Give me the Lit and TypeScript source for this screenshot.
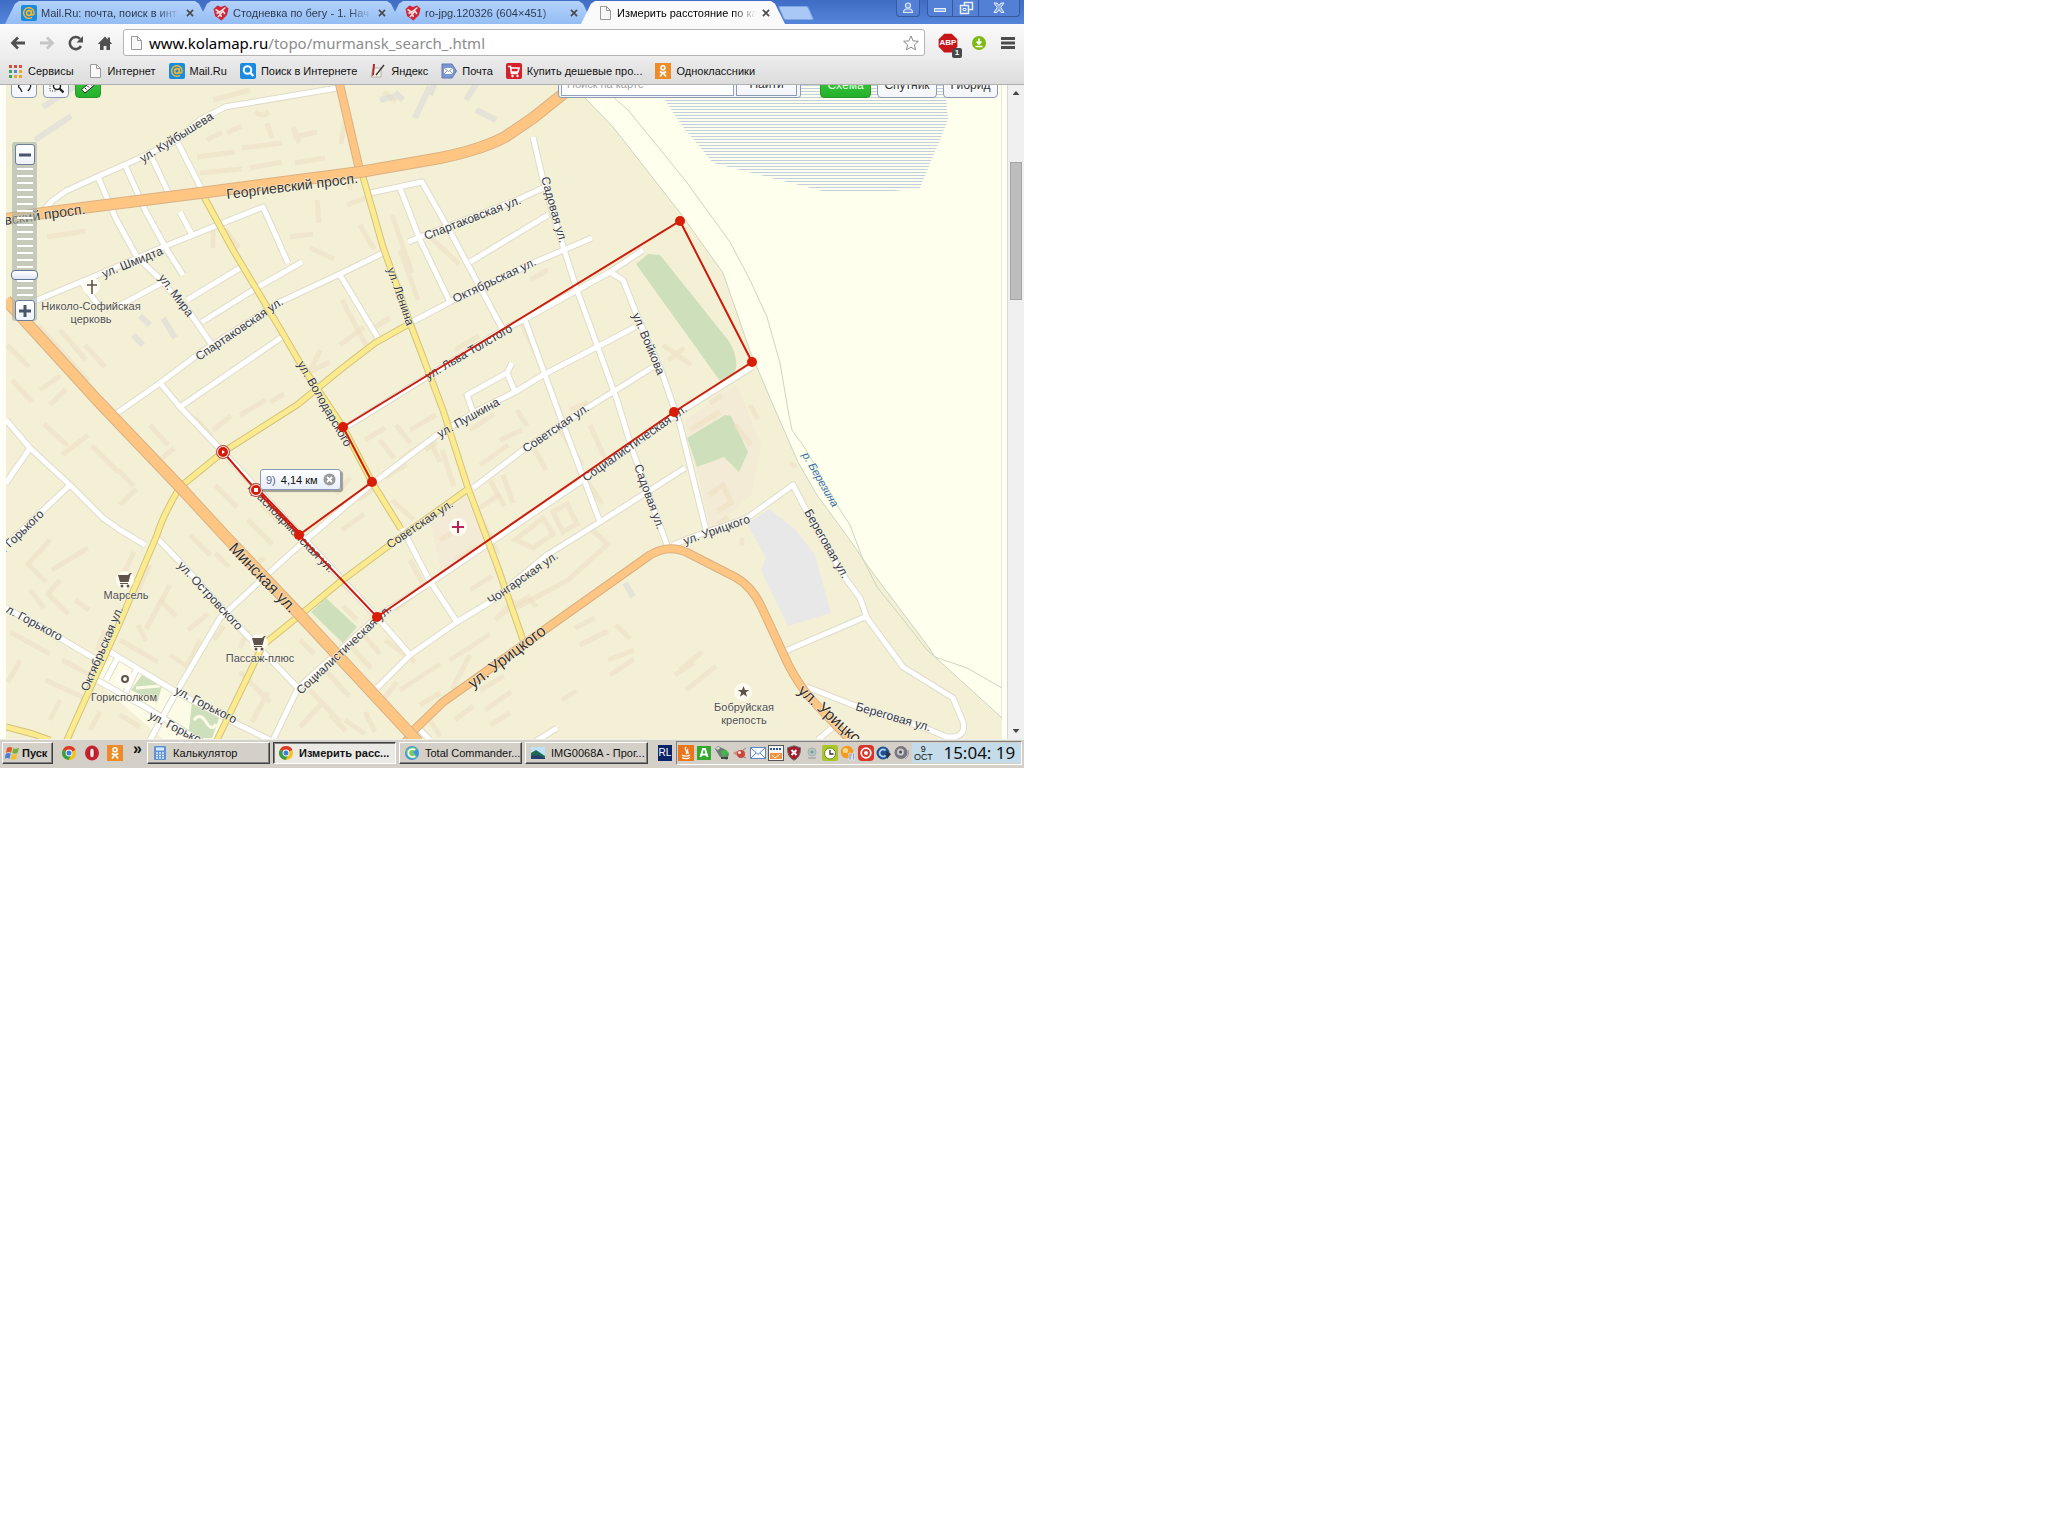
import { LitElement, html, svg, css, TemplateResult, SVGTemplateResult } from "lit";
import { customElement } from "lit/decorators.js";
import { classMap } from "lit/directives/class-map.js";

type Art = SVGTemplateResult;

const pageIcon: Art = svg`<path d="M3.500 1.500h6l4 4v9h-10z" fill="#f8f8f8" stroke="#9a9a9a"/><path d="M9.500 1.500v4h4" fill="none" stroke="#9a9a9a"/>`;
const mailRu: Art = svg`<rect width="16" height="16" rx="2" fill="#168de2"/><circle cx="8" cy="8" r="2.400" fill="none" stroke="#f5b52c" stroke-width="1.600"/><path d="M10.400 5.500v3.300c0 2 2.800 1.600 2.800-1A5.300 5.300 0 1 0 11 12.300" fill="none" stroke="#f5b52c" stroke-width="1.500"/>`;
const runner: Art = svg`<path d="M.5 4l4-3.500 3.500 1.500 4-1.500 3.500 3L14 10l-5.500 5.500L2 11z" fill="#cf2638"/><path d="M2.500 4.500l4 2.500 6-4.500M3.500 8.500l3-1.500 2 5M5 12l5-6 2 3" stroke="#f4dfe0" stroke-width="1.500" fill="none"/>`;
const okIcon: Art = svg`<rect width="16" height="16" fill="#ee8b27"/><circle cx="8" cy="4.800" r="2" fill="none" stroke="#fff" stroke-width="1.600"/><path d="M4.800 8.500c2 1.500 4.400 1.500 6.400 0M8 9.500l-3 4M8 9.500l3 4" stroke="#fff" stroke-width="1.700" fill="none"/>`;
const chromeIcon: Art = svg`<circle cx="8" cy="8" r="7" fill="#f2c318"/><path d="M8 8L2 4.400A7 7 0 0 1 14.400 5z" fill="#dd3a2c"/><path d="M8 8L2 4.400A7 7 0 0 0 7.500 15l3-5.500z" fill="#3b9c47"/><circle cx="8" cy="8" r="3.400" fill="#fff"/><circle cx="8" cy="8" r="2.500" fill="#3d7fd9"/>`;

const icons: Record<string, Art> = {
  page: pageIcon,
  mailru: mailRu,
  runner,
  ok: okIcon,
  chrome: chromeIcon,
  back: svg`<path d="M15 8H3M8 2.500L2.500 8 8 13.500" fill="none" stroke="#505050" stroke-width="2.800"/>`,
  forward: svg`<path d="M1 8h12M8 2.500L13.500 8 8 13.500" fill="none" stroke="#c6c6c6" stroke-width="2.800"/>`,
  reload: svg`<path d="M13 11A6 6 0 1 1 12 3.800" fill="none" stroke="#505050" stroke-width="2.600"/><path d="M15 1v6.500H8.500z" fill="#505050"/>`,
  home: svg`<path d="M8 1.500L.8 9h2.200v6h3.600v-4h2.800v4H13V9h2.200L13 6.600V2.500h-2.200v2z" fill="#505050"/>`,
  star: svg`<path d="M8 1l2.100 4.900 5.300.4-4 3.500 1.200 5.100L8 12.200l-4.600 2.700 1.200-5.100-4-3.500 5.300-.4z" fill="#fff" stroke="#8a8a8a"/>`,
  menu: svg`<path d="M1 3.500h14M1 8h14M1 12.500h14" stroke="#4c4c4c" stroke-width="2.800"/>`,
  download: svg`<circle cx="8" cy="8" r="7" fill="#7fb913"/><path d="M8 3.500v5M5.500 6.500L8 9l2.500-2.500M4.500 11.500h7" stroke="#fff" stroke-width="1.700" fill="none"/>`,
  apps: svg`${[2, 7, 12].map((y, r) => [2, 7, 12].map((x, c) => svg`<rect x=${x} y=${y} width="3" height="3" fill=${["#d94a3c", "#d94a3c", "#d9503c", "#43a05a", "#4d84dd", "#e7a928", "#43a05a", "#e7a928", "#e7a928"][r * 3 + c]} />`))}`,
  search: svg`<rect width="16" height="16" rx="2" fill="#1a8be0"/><circle cx="7.500" cy="7" r="3.800" fill="none" stroke="#fff" stroke-width="2"/><path d="M10.300 9.800l3 3.200" stroke="#fff" stroke-width="2.400"/>`,
  yandex: svg`<path d="M3 5h8v9H1z" fill="#f5f3ea" stroke="#a8a492" stroke-width=".8"/><path d="M3 1h2l-1 11-2 1z" fill="#b3262b"/><path d="M14 2L6 12" stroke="#333" stroke-width="1.300"/>`,
  post: svg`<path d="M1 1h10l4.500 7-4.500 7H1z" fill="#7d97d2" stroke="#6078b4"/><path d="M3 5h9v6H3z" fill="#fff"/><path d="M3 5l4.500 3.500L12 5M3 11l3-3M12 11L9 8" fill="none" stroke="#8c9bc4"/>`,
  cart: svg`<rect width="16" height="16" rx="2" fill="#d5202c"/><path d="M2 3.500h2.500l1 7H12M5 5h8l-1 4H6" fill="none" stroke="#fff" stroke-width="1.600"/><circle cx="6.500" cy="13" r="1.200" fill="#fff"/><circle cx="11.500" cy="13" r="1.200" fill="#fff"/>`,
  calc: svg`<rect x="2" y="1" width="12" height="14" rx="1" fill="#5e92d6"/><rect x="4" y="2.500" width="8" height="3" fill="#d9ecff"/><path d="M4 8h8M4 10.500h8M4 13h8" stroke="#e6f0fb" stroke-width="1.500" stroke-dasharray="2 1"/>`,
  totalcmd: svg`<circle cx="8" cy="8" r="7" fill="#3997dd"/><path d="M2 6c2-4 8-5 11-2L9 7l4 5c-4 3-9 1-10-2z" fill="#7cc66e"/><path d="M11 5a4 4 0 1 0 0 6" stroke="#fff" stroke-width="1.700" fill="none"/>`,
  image: svg`<rect x="1" y="2" width="14" height="12" fill="#bfe2fa"/><path d="M1 8l5-3 9 6v3H1z" fill="#1e6b54"/><path d="M1 11l7-1 7 3v1H1z" fill="#22406f"/>`,
  opera: svg`<ellipse cx="8" cy="8" rx="7" ry="7.500" fill="#c8202c"/><ellipse cx="8" cy="8" rx="2.400" ry="5" fill="#f4dedd" stroke="#8c1018"/>`,
  windows: svg`<path d="M2 3c2-1.500 3.600-1.300 5.300-.2L6 7.800C4.300 6.800 2.700 6.800 1 8z" fill="#e2562c"/><path d="M8.300 3.300c2 1 3.600.8 5.700-.5l-1.300 5c-2 1.300-3.700 1.300-5.500.3z" fill="#70b13b"/><path d="M.8 9c1.800-1.300 3.400-1.200 5-.2l-1.300 5c-1.600-1-3.200-1-4.900.2z" fill="#4a7fd8"/><path d="M7 9.200c2 1 3.600.8 5.500-.4l-1.400 5c-2 1.200-3.600 1.200-5.400.2z" fill="#f3bf2d"/>`,
  user: svg`<circle cx="8" cy="5.500" r="2.500" fill="#6f93dc" stroke="#dde8fb" stroke-width="1.200"/><path d="M3.500 12.500c0-5 9-5 9 0z" fill="#6f93dc" stroke="#dde8fb" stroke-width="1.200"/>`,
  minimize: svg`<rect x="2.500" y="8.500" width="11" height="3" fill="#8fb0ea" stroke="#e6eefb"/>`,
  restore: svg`<path d="M6.500 2.500h8v7h-8z" fill="none" stroke="#e6eefb" stroke-width="1.500"/><path d="M2.500 5.500h8v8h-8z" fill="#5b86d6" stroke="#e6eefb" stroke-width="1.500"/><path d="M5 8.500h3v2H5z" fill="none" stroke="#e6eefb"/>`,
  close: svg`<path d="M3 3h3l2 2.500L10 3h3L9.800 7.500 13 12.500h-3L8 9.600l-2 2.900H3l3.200-5z" fill="#86a9e6" stroke="#e6eefb"/>`,
  cross: svg`<path d="M4.500 4.500l7 7M11.500 4.500l-7 7" stroke="#4a4a4a" stroke-width="1.900"/>`,
  octagon: svg`<path d="M5 .5h6L15.500 5v6L11 15.500H5L.5 11V5z" fill="#c71518"/>`,
  java: svg`<rect width="16" height="16" fill="#e9761c"/><path d="M8 2c-3 3 3 4 0 7M10 4c-2 2 1 2 0 5M4 10c2 1.500 6 1.500 8 0M4 12.500c2 1.500 6 1.500 8 0" stroke="#fff" stroke-width="1.200" fill="none"/>`,
  agent: svg`<rect x="1" y="1" width="14" height="14" fill="#34a82d"/><path d="M4.500 12L7 4h2l2.500 8M5.500 9.500h5" stroke="#fff" stroke-width="1.900" fill="none"/>`,
  usb: svg`<path d="M1 4l3-3 8 4 3 4-2 6-7-3z" fill="#6b7f70"/><path d="M7 6l5-1 3 3-6 4z" fill="#44b849"/><path d="M7 13h7" stroke="#3f4a42" stroke-width="2"/><path d="M2.500 4l3-1.500" stroke="#dcdcdc" stroke-width="2"/>`,
  plug: svg`<path d="M1 8l4-2 2-1 3 3-1 4-5-2z" fill="#d08a84"/><circle cx="9" cy="9" r="4" fill="#c8463c"/><circle cx="7.500" cy="7.500" r="1.500" fill="#f6e8e4"/><path d="M11 5l3-2M12 12l2 1" stroke="#888"/>`,
  envelope: svg`<path d="M.5 2.500h15v11H.5z" fill="#f8fbff" stroke="#5b86c6"/><path d="M.5 2.500L8 9.500l7.500-7M.5 13.500L6 8M15.500 13.500L10 8" fill="none" stroke="#5b86c6"/>`,
  note: svg`<rect x=".5" y=".5" width="15" height="15" fill="#f6f6f6" stroke="#555"/><path d="M2 4h12" stroke="#2a55a5" stroke-width="2" stroke-dasharray="2 1"/><path d="M2 8h12v6H2z" fill="#f5903d"/><path d="M4 10l3 3 5-4" stroke="#fff" fill="none"/>`,
  shield: svg`<path d="M8 .8l6.500 2c0 6-1.500 10-6.500 12.400C3 12.800 1.500 8.800 1.500 2.800z" fill="#a31d2c" stroke="#64707a"/><path d="M5.500 5l5 5M10.500 5l-5 5" stroke="#fff" stroke-width="1.900"/>`,
  webcam: svg`<circle cx="8" cy="7" r="4" fill="#b9c8c6" stroke="#a1adab"/><circle cx="8" cy="7" r="1.600" fill="#6f9a9c"/><path d="M4 13h8" stroke="#b0b4b0" stroke-width="2"/>`,
  alarm: svg`<rect width="16" height="16" rx="2" fill="#a9c62a"/><circle cx="8" cy="8.500" r="5.500" fill="#fff" stroke="#6d8a16"/><path d="M8 5v4h3.500" stroke="#303030" stroke-width="1.300" fill="none"/>`,
  pause: svg`<circle cx="7" cy="7" r="6.300" fill="#f59b1e"/><circle cx="5.500" cy="5.500" r="2.600" fill="#fcd98a"/><path d="M9 8h2v7H9zM12.500 8h2v7h-2z" fill="#7d9bd8" stroke="#fff" stroke-width=".6"/>`,
  record: svg`<rect width="16" height="16" rx="4" fill="#d9352a"/><circle cx="8" cy="8" r="4.800" fill="none" stroke="#fff" stroke-width="1.700"/><circle cx="8" cy="8" r="2" fill="#fff"/>`,
  globe: svg`<circle cx="7" cy="8" r="6.500" fill="#1f4f8e"/><path d="M9.500 5.500a3.500 3.500 0 1 0 0 5" stroke="#a9d2f2" stroke-width="1.800" fill="none"/><path d="M10 6l5 3-4 5z" fill="#2c3440"/>`,
  speaker: svg`<circle cx="7" cy="7.500" r="6.500" fill="#76767c"/><circle cx="6.500" cy="7" r="3.500" fill="#c9c9ce"/><circle cx="6.500" cy="7" r="1.500" fill="#4c4c52"/><path d="M11 14c3-2 4-5 3-9" stroke="#9a8fc0" fill="none"/>`,
  lasso: svg`<path d="M4 8c-2 0-2-4 1-5M12 3c4 1 3 5 0 8M4 8l2 4" fill="none" stroke="#222" stroke-width="1.300"/>`,
  zoomArea: svg`<path d="M2 3v8h7" fill="none" stroke="#222" stroke-dasharray="1 1.500"/><circle cx="9" cy="6" r="3.500" fill="#fff" stroke="#222" stroke-width="1.500"/><path d="M11.500 8.500l4 4" stroke="#222" stroke-width="2.300"/>`,
  ruler: svg`<path d="M1.500 9.500l9-7.500 3.500 3.500-9 7.500z" fill="#fff" stroke="#222"/><path d="M5 8l1.500 1.500M7.500 6L9 7.500M10 4l1.500 1.500" stroke="#222"/>`,
};

const icon = (name: string, cls = "ic") =>
  html`<svg class=${cls} viewBox="0 0 16 16" aria-hidden="true">${icons[name]}</svg>`;

const whiteRoads = [
  "M43 211L52 201 66 191 97 177 140 158 177 140 200 120 225 107 337 88",
  "M98 177L116 219 137 257 158 277 190 313 212 345",
  "M125 165L146 212 167 250 183 275",
  "M152 158L168 192",
  "M180 212L192 235",
  "M178 143L202 190",
  "M30 303L93 277 163 247 263 207 288 263",
  "M80 280L98 305",
  "M117 307L167 280",
  "M187 300L240 268",
  "M202 322L258 287 302 262",
  "M117 413L160 383 200 353 280 302 340 274 383 253",
  "M340 275L378 338",
  "M160 383L180 407 282 337",
  "M178 405L223 452 377 617 410 655",
  "M6 420L30 448 70 485 103 518 120 530 145 545",
  "M30 448L6 483",
  "M70 485L6 545",
  "M157 538L180 562 240 628 298 688 273 740",
  "M150 740L173 698 220 618 270 572 300 545 368 487 437 435 477 411 515 392 543 375 597 347 635 327",
  "M515 392L507 373 512 363M507 373L467 395 473 412",
  "M6 608L60 638 97 660",
  "M110 652L173 690 233 722 270 740",
  "M93 678L147 708 198 740",
  "M118 657L106 680M137 668L126 692",
  "M298 688L377 617 430 583 580 482 680 412 752 367",
  "M343 429L430 375 503 330 527 318 610 272 643 250",
  "M610 272L623 280 640 323 662 373 680 425 707 534",
  "M377 688L410 655 457 622 490 602 547 555 600 522 685 468",
  "M402 528L428 578 457 622",
  "M533 137L543 180 562 243 577 290 617 400 633 452 667 545",
  "M400 188L420 240 450 302",
  "M370 193L422 182 453 237 503 330",
  "M408 242L420 237 517 200 543 188",
  "M470 262L548 215",
  "M412 322L450 302 533 263 592 238",
  "M525 320L557 408 600 522",
  "M473 488L523 450 587 408 653 367",
  "M673 545L690 538 747 518 793 485 807 512 843 575 860 598 867 618 903 667 953 698 963 722Q967 738 947 737L925 728 853 705 807 687",
  "M783 652L865 617",
  "M420 730L430 740M530 745L557 728M818 740L832 728",
];

const yellowRoads = [
  "M203 195L233 250 282 332 300 363 343 427 372 482 401 529",
  "M363 177L383 247 410 323 443 410 468 488 498 568 523 640",
  "M409 324L375 343 340 370 297 405 223 452 180 487Q163 515 157 535L120 622 66 742",
  "M217 740L263 645 300 615 340 582 387 547 468 489",
  "M6 727L33 734 50 740",
];

const wideRoads = [
  "M6 219L43 213 200 193 360 172 440 158Q480 150 505 137L533 118 578 82",
  "M6 300L97 400 180 487 227 538 300 615 418 742",
];

const orangeRoads = [
  "M339 82L360 172",
  "M406 742L412 732 443 702 467 685 547 628 650 555Q670 543 690 554L735 577Q752 586 762 608L788 664Q798 684 812 700L850 740",
];

const hulls = [
  "M197 157l38-5M242 148l40-5M293 137l24-5M200 173l42-4M250 168l32-6M295 163l30-5M207 140l15-8M227 133l15-7M267 123l5 15M293 127l6 16",
  "M213 100l37-10M47 237l38-6M213 230v18M317 200l2 23M290 237l23-3M310 248l24 11M225 230l14 18M255 112q8 6 14 0",
  "M384 92l12 10M345 120l-4 24M347 205l20-8M350 170v20M392 215l20 58M425 232l34 32M400 250l18 50M360 225l14 24M342 300l24 45M370 330l20-12",
  "M340 345l24-18M350 360l20-14M320 350l-14 30M310 372l20-10M7 345l22 22M38 325l50 56M12 380l20 22M40 390l20-14M50 405l16-16M85 345l20 22M60 330l26 30",
  "M44 424l24 22M92 446l26 26M118 470l16 16M62 455l26-20M130 430l10 10M150 425l18 20M160 460l14-12M195 418l16 18M213 430l18-14M240 415l26-15M270 402l14-8",
  "M50 540l-22 24 18 18M52 570l36-22M60 580l-12 14 20 20M75 600l14 10M30 590l14 18M120 505l16-16M134 552l-12 26M150 565l-16 34M170 585l-24 44",
  "M190 480l16-12M205 520l16 16M215 485l22 22M196 500l20 22M248 520l24 24M262 505l18 18M215 553l14 14M190 535l20 20M250 570l14-12M276 590l22 22",
  "M188 630l20-16M200 640l-12 24M138 625l8 16M120 640l38 22M170 655l18 12M105 630l-8 20M160 600l16 16M214 640l10-14M240 648l8-18",
  "M10 632l40 22M62 660l34 18M20 660l-12 22M45 680l40 18M60 700l-10 20M90 730l10-18M120 715l20 12",
  "M240 672l30 30M252 722l16-30M285 715l12-22M300 727l24-26M310 690l30 32M325 670l24 26M345 640l26 28M357 620l-14-14M362 600l-22-18M330 715l16 16M300 640l14 14",
  "M342 530l22-16M358 500l20-14M385 478l22-14M350 478l-14 16M392 500l22 20M400 460l22-16M430 440l10 22M410 430l26-15M365 440l20-12M380 440l14 18M396 425l14 18",
  "M442 450l12 36M470 430l24-16M480 465l28-20M490 480l14 26M503 475l10 28M517 410l10 16M532 445l14 25M545 435l20-14M500 440l22-10M560 430l22 34M590 425l18 40M570 410l18-8",
  "M515 540l28-22 10 16-20 14zM553 512l14-8 10 20-14 8zM480 508l20-14M482 520l16 34M456 560l22-14M470 590l22-14M410 560l14 26M440 540l16-10M580 470l22 34M592 530l16 14-40 36-52 28",
  "M470 655l-18 34M450 660l40-26M400 690l40-26M500 615l28-18 8 10M515 600l-20 20M420 705l20-12M430 720l10 16M480 690l24-14M485 710l26-18M455 720l18-14M490 725l20-12",
  "M575 628l20-10M580 645l28-14M562 700l14-9M608 660l26-10M610 675l24-16M616 625l14 14M675 675l18-12M680 670l22-18M686 690l30-24",
  "M690 430l30-18M735 425l16 20M709 495l14-10 8 18-14 8M718 525l10-8M790 463l6 4M742 538v8M663 345l28 20M668 360l16-12M710 403l12-8M750 405l8 14",
  "M345 720l20 14M365 712l10 20M383 700l14-18M530 280l18-10M425 450l12-8M360 630l20 24M385 640l30 22M395 610l22-18M520 320l16 34M455 350l24-14",
];

const greyHulls = "M35 140l36-24M43 107l34-22M163 318l12 20M133 335l10 10M140 316l10 9M395 92l8 8M415 118l15-32M430 95l6-16M466 100l14-22M476 110l20 10M625 583l8 14M380 100l16-4";

interface Label { t: string; x: number; y: number; a: number; s?: string }

const labels: Label[] = [
  { t: "ул. Куйбышева", x: 143, y: 163, a: -32 },
  { t: "Георгиевский просп.", x: 227, y: 199, a: -7, s: "mid" },
  { t: "вский просп.", x: 5, y: 225, a: -8, s: "mid" },
  { t: "ул. Шмидта", x: 104, y: 278, a: -22 },
  { t: "ул. Мира", x: 158, y: 278, a: 53 },
  { t: "Спартаковская ул.", x: 199, y: 361, a: -34 },
  { t: "ул. Володарского", x: 297, y: 364, a: 60 },
  { t: "ул. Ленина", x: 387, y: 269, a: 71 },
  { t: "Спартаковская ул.", x: 426, y: 240, a: -21 },
  { t: "Октябрьская ул.", x: 455, y: 303, a: -25 },
  { t: "Садовая ул.", x: 541, y: 178, a: 74 },
  { t: "ул. Льва Толстого", x: 428, y: 380, a: -30 },
  { t: "ул. Войкова", x: 632, y: 315, a: 67 },
  { t: "ул. Пушкина", x: 440, y: 438, a: -29 },
  { t: "Советская ул.", x: 526, y: 453, a: -34 },
  { t: "Советская ул.", x: 390, y: 549, a: -34 },
  { t: "Чонгарская ул.", x: 491, y: 605, a: -35 },
  { t: "Социалистическая ул.", x: 586, y: 482, a: -35 },
  { t: "Садовая ул.", x: 634, y: 466, a: 70 },
  { t: "ул. Урицкого", x: 473, y: 689, a: -37, s: "big" },
  { t: "Социалистическая ул.", x: 301, y: 695, a: -43 },
  { t: "Минская ул.", x: 228, y: 549, a: 46, s: "big" },
  { t: "Красноармейская ул.", x: 247, y: 488, a: 46 },
  { t: "ул. Островского", x: 177, y: 566, a: 47 },
  { t: ". Горького", x: 5, y: 553, a: -44 },
  { t: "л. Горького", x: 5, y: 612, a: 28 },
  { t: "Октябрьская ул.", x: 88, y: 692, a: -67 },
  { t: "ул. Горького", x: 174, y: 693, a: 27 },
  { t: "ул. Горького", x: 148, y: 718, a: 27 },
  { t: "ул. Урицкого", x: 685, y: 545, a: -19 },
  { t: "Береговая ул.", x: 804, y: 512, a: 60 },
  { t: "Береговая ул.", x: 855, y: 710, a: 16 },
  { t: "ул. Урицкого", x: 797, y: 692, a: 42, s: "big" },
  { t: "р. Березина", x: 802, y: 455, a: 60, s: "river" },
];

const places: [string, number, number][] = [
  ["Николо-Софийская", 91, 310],
  ["церковь", 91, 323],
  ["Марсель", 126, 599],
  ["Пассаж-плюс", 260, 662],
  ["Горисполком", 124, 701],
  ["Бобруйская", 744, 711],
  ["крепость", 744, 724],
];

const route = "M223 452L256 490 299 535 372 482 343 427 680 221 752 362 674 412 377 617 299 535";
const stops: [number, number][] = [[299, 535], [372, 482], [343, 427], [680, 221], [752, 362], [674, 412], [377, 617]];

const trolley = (x: number, y: number) => svg`
  <circle class="halo" cx=${x} cy=${y} r="9"/>
  <path transform="translate(${x - 7} ${y - 7})" d="M0 2h10l2-2h2l-1.500 1.500L10.500 9H2zM2 10h8v1H2z" fill="#5f534c"/>
  <circle cx=${x - 3} cy=${y + 6} r="1.500" fill="#5f534c"/><circle cx=${x + 3} cy=${y + 6} r="1.500" fill="#5f534c"/>`;

const terminal = (x: number, y: number, glyph: string) => svg`
  <g transform="translate(${x} ${y})">
    <circle r="7" fill="#b2483c"/><circle r="6" fill="#fbe9e2"/><circle r="5" fill="#d41c0c"/>
    <path d=${glyph} fill="#fff"/>
  </g>`;

@customElement("town-map")
class TownMap extends LitElement {
  static styles = css`
    :host { display: block; overflow: hidden; background: #f4f0d6; }
    svg { display: block; width: 100%; height: 100%; }
    .line { fill: none; stroke-linejoin: round; }
    .hull { fill: none; stroke: #ecdfc3; stroke-width: 5; opacity: 0.55; }
    .grey { stroke: #d8d8d8; stroke-width: 6; }
    .white-edge { stroke: #dfdccb; stroke-width: 7; }
    .white { stroke: #ffffff; stroke-width: 5; }
    .yellow-edge { stroke: #d3c27c; stroke-width: 7; }
    .yellow { stroke: #fbea8e; stroke-width: 5; }
    .orange-edge { stroke: #dab184; stroke-width: 9; }
    .orange { stroke: #fec583; stroke-width: 7; }
    .wide-edge { stroke: #dab184; stroke-width: 12; }
    .wide { stroke: #fec583; stroke-width: 10; }
    .green { fill: #cde0bb; }
    .bank { fill: none; stroke: #cdd5c3; }
    .halo { fill: #fffdf4; opacity: 0.9; }
    text { font: 12px "Liberation Sans", Arial, sans-serif; fill: #353a4a; }
    .name { paint-order: stroke; stroke: #fbf8e8; stroke-width: 1px; }
    .mid { font-size: 14px; fill: #33302c; }
    .big { font-size: 16px; fill: #33302c; }
    .river { font-size: 11px; font-style: italic; fill: #3470a8; }
    .place { font-size: 11px; text-anchor: middle; fill: #4e4e4e; }
    .route { fill: none; stroke: #cb1c0c; stroke-width: 2; }
    .stop { fill: #d81e06; }
  `;

  private roads(list: string[], kind: string) {
    return svg`${list.map((d) => svg`<path class="line ${kind}-edge" d=${d}/>`)}${list.map((d) => svg`<path class="line ${kind}" d=${d}/>`)}`;
  }

  render() {
    return html`<svg viewBox="0 85 1007 654" preserveAspectRatio="xMinYMin slice" role="img" aria-label="Карта">
      <defs>
        <pattern id="marsh" width="6" height="3" patternUnits="userSpaceOnUse"><rect y="1" width="6" height="1" fill="#c2cfdf"/></pattern>
        <clipPath id="sheet"><rect x="6" y="80" width="996" height="662"/></clipPath>
      </defs>
      <rect y="80" width="1007" height="662" fill="#fffff8"/>
      <g clip-path="url(#sheet)">
        <rect x="6" y="80" width="996" height="662" fill="#f4f0d5"/>
        <path d="M570 82L584 97 613 127 681 214 723 273 750 351 773 405 798 462 817 495 850 540 867 565 927 645 935 657 1002 718V80z" fill="#feffec" stroke="#cdd5c3"/>
        <path class="bank" d="M600 85L613 97 628 110 685 180 730 242 750 280 767 317 780 363 788 410 792 430 805 448 837 505 850 525 862 557 877 587 902 618 927 650 935 657 967 668 1002 688"/>
        <path d="M652 82L663 97 680 123 713 163 830 193 877 193 920 188 948 120 945 82z" fill="url(#marsh)"/>
        <path d="M430 520l36-24 20 50-44 30zM685 420l52-35 24 60-10 50-40 35z" fill="#f2e8d4" opacity=".7"/>
        <path class="green" d="M636 264l12-10 12 1 64 80q14 16 12 34l-10 18-6-6z"/>
        <path class="green" d="M687 438l38-23 6 1 17 36-9 20-15-15-27 10z"/>
        <path class="green" d="M311 612l15-14 31 29-14 16z"/>
        <path d="M112 655l64 34 50 24-12 27h-50l-70-60z" fill="#fcfbe6"/>
        <path class="green" d="M142 675l20 11-5 17-26-13zM192 702l28 14-8 22h-24z"/>
        <path d="M136 688l24-2M194 720q6-8 12 2t10 2" stroke="#fcfbe6" stroke-width="3" fill="none"/>
        <path d="M747 524l22-15 26 20 20 26 16 58-43 13-27-56 5-12z" fill="#e8e8e8"/>
        ${hulls.map((d) => svg`<path class="hull" d=${d}/>`)}
        <path class="hull grey" d=${greyHulls}/>
        ${this.roads(whiteRoads, "white")}
        ${this.roads(yellowRoads, "yellow")}
        ${this.roads(orangeRoads, "orange")}
        ${this.roads(wideRoads, "wide")}
        ${labels.map((l) => svg`<text class="name ${l.s ?? ""}" transform="translate(${l.x} ${l.y}) rotate(${l.a})">${l.t}</text>`)}
        <circle class="halo" cx="91" cy="286" r="9"/>
        <path d="M92 280v14M87 285h10" stroke="#5f534c" stroke-width="1.600"/>
        ${trolley(125, 580)}${trolley(259, 643)}
        <circle class="halo" cx="125" cy="679" r="9"/>
        <circle cx="125" cy="679" r="3" fill="none" stroke="#5f534c" stroke-width="2"/>
        <circle class="halo" cx="743" cy="692" r="9"/>
        <path d="M743.500 686l1.500 4h4.200l-3.400 2.600 1.300 4.200-3.600-2.600-3.600 2.600 1.300-4.200-3.400-2.600h4.200z" fill="#5f534c"/>
        <circle class="halo" cx="458" cy="527" r="9"/>
        <path d="M458 521v12M452 527h12" stroke="#b4235a" stroke-width="2"/>
        ${places.map(([t, x, y]) => svg`<text class="name place" x=${x} y=${y}>${t}</text>`)}
        <path class="route" d=${route}/>
        <path class="route" d="M257 488L300 533"/>
        ${stops.map(([x, y]) => svg`<circle class="stop" cx=${x} cy=${y} r="5"/>`)}
        ${terminal(223, 452, "M-1-2l3 2-3 2z")}
        ${terminal(256, 490, "M-2-2h4v4h-4z")}
      </g>
    </svg>`;
  }
}

const tabs = [
  { title: "Mail.Ru: почта, поиск в инт", icon: "mailru", active: false },
  { title: "Стодневка по бегу - 1. Нач", icon: "runner", active: false },
  { title: "ro-jpg.120326 (604×451)", icon: "runner", active: false },
  { title: "Измерить расстояние по ка", icon: "page", active: true },
];

const bookmarks: [string, string][] = [
  ["apps", "Сервисы"],
  ["page", "Интернет"],
  ["mailru", "Mail.Ru"],
  ["search", "Поиск в Интернете"],
  ["yandex", "Яндекс"],
  ["post", "Почта"],
  ["cart", "Купить дешевые про..."],
  ["ok", "Одноклассники"],
];

const tasks: [string, string, boolean][] = [
  ["calc", "Калькулятор", false],
  ["chrome", "Измерить расс...", true],
  ["totalcmd", "Total Commander...", false],
  ["image", "IMG0068A - Прог...", false],
];

const tray = ["java", "agent", "usb", "plug", "envelope", "note", "shield", "webcam", "alarm", "pause", "record", "globe", "speaker"];

@customElement("app-root")
class AppRoot extends LitElement {
  static styles = css`
    :host { display: block; min-height: 100vh; background: #fff; font: 11px "Liberation Sans", Tahoma, sans-serif; color: #111; }
    * { box-sizing: border-box; }
    button, input { font: inherit; color: inherit; margin: 0; }
    button { padding: 0; border: 0; background: none; }
    a { color: inherit; text-decoration: none; }
    .desktop { width: 50vw; height: 50vh; display: flex; flex-direction: column; overflow: hidden; background: #e4e4e4; }
    .ic { width: 16px; height: 16px; flex: none; display: block; }

    .strip { display: flex; height: 24px; padding-left: 5px; background: linear-gradient(#3f6cc4, #5585da); flex: none; }
    .tab { flex: 0 1 204px; min-width: 0; display: flex; align-items: center; gap: 3px; height: 23px; margin: 1px -12px 0 0; padding: 0 12px 0 16px;
      clip-path: polygon(0 100%, 10px 12%, 14px 0, calc(100% - 14px) 0, calc(100% - 10px) 12%, 100% 100%); background: linear-gradient(#b3d2fb, #94bdf4); color: #2d3b52; }
    .tab.active { background: #fafafa; color: #000; z-index: 1; }
    .tab a { flex: 1; min-width: 0; overflow: hidden; white-space: nowrap; display: flex; align-items: center; gap: 4px; line-height: 20px; -webkit-mask-image: linear-gradient(to right, #000 85%, transparent); mask-image: linear-gradient(to right, #000 85%, transparent); }
    .tab button .ic { width: 14px; height: 14px; }
    .new { width: 30px; height: 14px; margin: 6px 0 0 8px; transform: skewX(24deg); background: #a9c8f5; border: 1px solid #7fa5e2; border-radius: 2px; }
    .caption { display: flex; margin: 0 4px 0 auto; height: 17px; }
    .caption button { display: grid; place-items: center; width: 26px; border: 1px solid #36599f; border-top: 0; background: #5380d4; }
    .caption button + button { border-left: 0; }
    .caption .person { margin-right: 7px; border-radius: 0 0 4px 4px; width: 24px; }
    .caption .min { border-left: 1px solid #36599f; border-radius: 0 0 0 4px; }
    .caption .shut { width: 41px; border-radius: 0 0 4px 0; }

    .nav { display: flex; align-items: center; height: 35px; padding: 2px 8px 0 10px; gap: 13px; background: linear-gradient(#fafafa, #ececec); flex: none; }
    .address { flex: 1; display: flex; align-items: center; height: 27px; margin-left: -3px; padding: 0 5px 0 4px; gap: 5px; background: #fff; border: 1px solid #b4b4b4; border-radius: 3px; }
    .url { flex: 1; position: relative; font: 15px/24px "Noto Sans", Tahoma, sans-serif; height: 24px; }
    .url input { width: 100%; height: 24px; border: 0; padding: 0; background: none; outline: 0; color: transparent; }
    .url span { position: absolute; inset: 0; white-space: nowrap; color: #8c8c8c; }
    .url b { font-weight: 400; color: #000; }
    .abp { position: relative; width: 20px; height: 20px; display: grid; place-items: center; color: #fff; font: bold 8px/20px "Liberation Sans", sans-serif; }
    .abp > * { grid-area: 1 / 1; z-index: 1; }
    .abp .ic { width: 20px; height: 20px; z-index: 0; }
    .abp .badge { position: absolute; right: -4px; bottom: -5px; width: 10px; height: 10px; border-radius: 2px; background: #484848; line-height: 10px; }

    .marks { display: flex; align-items: center; gap: 13px; height: 26px; padding: 0 7px 2px; background: linear-gradient(#ebebeb, #dcdcdc); border-bottom: 1px solid #b0b0b0; flex: none; }
    .marks a { display: flex; align-items: center; gap: 5px; line-height: 16px; white-space: nowrap; }

    .page { flex: 1; min-height: 0; display: flex; }
    .canvas { position: relative; flex: 1; min-width: 0; overflow: hidden; }
    town-map { height: 100%; }
    .tools { position: absolute; top: -14px; left: 11px; right: 9px; display: flex; gap: 6px; }
    .tools button { height: 27px; border: 1px solid #8b9bb2; border-radius: 4px; background: linear-gradient(#fff, #f3f5fa); display: grid; place-items: center; color: #333; font-size: 12px; }
    .tools .sq { width: 26px; }
    .tools .sq .ic { margin-top: 6px; }
    .tools .on { background: linear-gradient(#45cf45, #23b02a); border-color: #2b9430; color: #e6ffe4; }
    .find { display: flex; gap: 2px; margin: 0 13px 0 auto; padding: 0 3px 2px 2px; height: 27px; background: #f3f5fb; border: 1px solid #8b9bb2; border-radius: 3px; }
    .find input { width: 173px; height: 24px; padding: 0 5px; border: 1px solid #8fa2c0; background: #fff; outline: 0; }
    .find input::placeholder { color: #a0a0a0; opacity: 1; }
    .find button { width: 61px; height: 24px; border-radius: 0; }
    .scheme { width: 51px; }
    .sat { width: 60px; }
    .hyb { width: 55px; }

    .zoom { position: absolute; left: 11px; top: 57px; width: 27px; display: flex; flex-direction: column; align-items: center; padding: 2px 0 0; }
    .zoom::before { content: ""; position: absolute; inset: 0 1px; border-radius: 3px; background: rgba(165, 176, 168, 0.6); }
    .zoom button { position: relative; width: 20px; height: 21px; border: 1px solid #6d7f99; border-radius: 3px; background: linear-gradient(#fff, #eef2f8); display: grid; place-items: center; }
    .zoom .ic { width: 14px; height: 14px; }
    .zoom input { position: relative; appearance: none; writing-mode: vertical-lr; width: 27px; height: 135px; outline: 0;
      background: repeating-linear-gradient(transparent 0 3px, #fff 3px 5px, transparent 5px 7px) center / 16px 100% no-repeat; }
    .zoom input::-webkit-slider-thumb { appearance: none; width: 27px; height: 10px; border: 1px solid #5f7595; border-radius: 4px; background: linear-gradient(#fff, #dfe6f2); }

    .tip { position: absolute; left: 260px; top: 384px; display: flex; align-items: center; height: 21px; padding: 0 4px 0 5px; gap: 5px; border: 1px solid #8a9ab8; border-radius: 3px; background: linear-gradient(#fff, #e9eefa); box-shadow: 2px 2px 1px rgba(80, 80, 80, 0.5); white-space: nowrap; }
    .tip i { font-style: normal; color: #55688f; }
    .tip .ic { width: 13px; height: 13px; }

    .scroll { width: 17px; display: flex; flex-direction: column; align-items: center; background: #f0f0f0; border-left: 1px solid #ddd8c4; flex: none; }
    .scroll button { width: 16px; height: 16px; display: grid; place-items: center; }
    .scroll .thumb { width: 12px; height: 138px; margin: 61px 0 auto; background: #bdbdbd; border: 1px solid #a5a5a5; }
    .arrow { width: 7px; height: 4px; background: #444; clip-path: polygon(50% 0, 100% 100%, 0 100%); }
    .arrow.down { clip-path: polygon(0 0, 100% 0, 50% 100%); }

    .bar { display: flex; align-items: center; height: 29px; padding: 0 2px 2px; background: #d4d0c8; border-top: 1px solid #efefea; flex: none; }
    .bar button { display: flex; align-items: center; }
    .start { width: 51px; height: 22px; gap: 1px; padding: 0 2px; border: 1px solid; border-color: #fff #404040 #404040 #fff; box-shadow: inset -1px -1px #808080; font-weight: 700; }
    .quick { display: flex; align-items: center; gap: 7px; margin-left: 8px; flex: none; }
    .more { width: 24px; padding: 0 0 8px 10px; font-size: 16px; line-height: 14px; font-weight: 700; }
    .tasks { display: flex; gap: 3px; }
    .tasks button { width: 123px; height: 22px; gap: 5px; padding: 0 4px; border: 1px solid; border-color: #fff #404040 #404040 #fff; box-shadow: inset -1px -1px #808080; white-space: nowrap; overflow: hidden; }
    .tasks .pressed { border-color: #404040 #fff #fff #404040; box-shadow: inset 1px 1px #808080; background: #ebe9e5; font-weight: 700; }
    .lang { margin-left: 10px; width: 14px; height: 16px; background: #0a246a; color: #fff; font-size: 10px; line-height: 16px; text-align: center; }
    .tray { flex: 1; display: flex; align-items: center; gap: 2px; height: 24px; margin-left: 4px; padding-left: 1px; border: 1px solid; border-color: #808080 #fff #fff #808080; }
    .clock { flex: 1; display: flex; align-items: center; height: 20px; gap: 5px; padding-left: 2px; background: #c4dcea; }
    .date { font-size: 9px; line-height: 8px; text-align: center; }
    .time { flex: 1; font: 17px/20px "Noto Sans", sans-serif; white-space: nowrap; text-align: center; }
  `;

  private renderTab(t: (typeof tabs)[number]): TemplateResult {
    return html`<div class=${classMap({ tab: true, active: t.active })}>
      <a href="#">${icon(t.icon)}${t.title}</a>
      <button aria-label="Закрыть вкладку">${icon("cross")}</button>
    </div>`;
  }

  render() {
    return html`<div class="desktop">
      <div class="strip">
        ${tabs.map((t) => this.renderTab(t))}
        <button class="new" aria-label="Новая вкладка"></button>
        <div class="caption">
          <button class="person" aria-label="Профиль">${icon("user")}</button>
          <button class="min" aria-label="Свернуть">${icon("minimize")}</button>
          <button aria-label="Восстановить">${icon("restore")}</button>
          <button class="shut" aria-label="Закрыть">${icon("close")}</button>
        </div>
      </div>
      <nav class="nav">
        <button aria-label="Назад">${icon("back")}</button>
        <button aria-label="Вперёд">${icon("forward")}</button>
        <button aria-label="Обновить">${icon("reload")}</button>
        <button aria-label="Домой">${icon("home")}</button>
        <div class="address">
          ${icon("page")}
          <div class="url"><input aria-label="Адрес" /><span><b>www.kolamap.ru</b>/topo/murmansk_search_.html</span></div>
          <button aria-label="В закладки">${icon("star")}</button>
        </div>
        <button class="abp">${icon("octagon")}<span>ABP</span><span class="badge">1</span></button>
        <button aria-label="Загрузки">${icon("download")}</button>
        <button aria-label="Меню">${icon("menu")}</button>
      </nav>
      <div class="marks">${bookmarks.map(([i, t]) => html`<a href="#">${icon(i)}${t}</a>`)}</div>
      <main class="page">
        <div class="canvas">
          <town-map></town-map>
          <div class="tools">
            <button class="sq" aria-label="Перемещение">${icon("lasso")}</button>
            <button class="sq" aria-label="Увеличить область">${icon("zoomArea")}</button>
            <button class="sq on" aria-label="Линейка">${icon("ruler")}</button>
            <div class="find">
              <input type="text" aria-label="Поиск на карте" placeholder="Поиск на карте" />
              <button>Найти</button>
            </div>
            <button class="scheme on">Схема</button>
            <button class="sat">Спутник</button>
            <button class="hyb">Гибрид</button>
          </div>
          <div class="zoom">
            <button aria-label="Отдалить"><svg class="ic" viewBox="0 0 14 14"><path d="M1 7h12" stroke="#48546a" stroke-width="3"/></svg></button>
            <input type="range" aria-label="Масштаб" min="0" max="100" .value=${"84"} />
            <button aria-label="Приблизить"><svg class="ic" viewBox="0 0 14 14"><path d="M1 7h12M7 1v12" stroke="#48546a" stroke-width="3"/></svg></button>
          </div>
          <div class="tip"><i>9)</i><span>4,14 км</span>
            <button aria-label="Убрать"><svg class="ic" viewBox="0 0 13 13"><circle cx="6.500" cy="6.500" r="6" fill="#9a9a9a"/><path d="M4 4l5 5M9 4l-5 5" stroke="#fff" stroke-width="1.800"/></svg></button>
          </div>
        </div>
        <div class="scroll">
          <button aria-label="Вверх"><span class="arrow"></span></button>
          <div class="thumb"></div>
          <button aria-label="Вниз"><span class="arrow down"></span></button>
        </div>
      </main>
      <footer class="bar">
        <button class="start">${icon("windows")}Пуск</button>
        <div class="quick">
          <button aria-label="Chrome">${icon("chrome")}</button>
          <button aria-label="Opera">${icon("opera")}</button>
          <button aria-label="Одноклассники">${icon("ok")}</button>
        </div>
        <span class="more">»</span>
        <div class="tasks">${tasks.map(([i, t, on]) => html`<button class=${classMap({ pressed: on })}>${icon(i)}${t}</button>`)}</div>
        <span class="lang">RL</span>
        <div class="tray">
          ${tray.map((i) => icon(i))}
          <div class="clock"><div class="date">9<br />ОСТ</div><div class="time">15:04: 19</div></div>
        </div>
      </footer>
    </div>`;
  }
}
